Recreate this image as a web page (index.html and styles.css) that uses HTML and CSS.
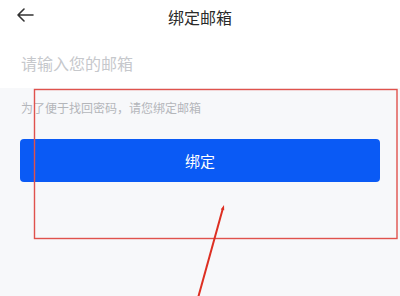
FILE: index.html
```html
<!DOCTYPE html>
<html lang="zh-CN">
<head>
    <meta charset="UTF-8">
    <meta name="viewport" content="width=device-width, initial-scale=1.0">
    <title>绑定邮箱</title>
    <link rel="stylesheet" href="styles.css">
</head>
<body>
    <header class="top-bar">
        <a class="back" href="#">
            <svg width="18" height="14" viewBox="0 0 18 14">
                <path d="M17 7H2M8 1L2 7l6 6" fill="none" stroke="#333" stroke-width="1.6" stroke-linecap="round" stroke-linejoin="round"/>
            </svg>
        </a>
        <h1>绑定邮箱</h1>
    </header>

    <section class="input-section">
        <input type="email" class="email-input" placeholder="请输入您的邮箱">
    </section>

    <section class="bind-section">
        <p class="hint">为了便于找回密码，请您绑定邮箱</p>
        <button type="button" class="bind-btn">绑定</button>
    </section>

    <!-- annotation -->
    <svg class="mark" width="400" height="296" viewBox="0 0 400 296">
        <rect x="34.5" y="89.5" width="362.5" height="149" fill="none" stroke="#e0524c" stroke-width="1.4"/>
        <path d="M198 298L223 208" stroke="#dd2f22" stroke-width="2" fill="none"/>
        <path d="M224 205l-3.2 4.4 3.4 0.9z" fill="#dd2f22"/>
    </svg>
</body>
</html>
```

FILE: styles.css
```css
body {
    margin: 0;
    width: 400px;
    height: 296px;
    overflow: hidden;
    background-color: #f7f8fa;
    font-family: "Noto Sans CJK SC", "Noto Sans", sans-serif;
    position: relative;
}

.top-bar {
    background-color: #ffffff;
    height: 33px;
    display: flex;
    align-items: center;
    justify-content: center;
    position: relative;
}

.back {
    position: absolute;
    left: 16px;
    top: 8px;
    display: flex;
}

h1 {
    margin: 0;
    font-size: 16px;
    font-weight: 400;
    color: #2a2a2a;
}

.input-section {
    background-color: #ffffff;
    height: 55px;
    display: flex;
    align-items: center;
    padding: 0 21px;
}

.email-input {
    border: none;
    outline: none;
    width: 100%;
    padding: 0;
    font-family: inherit;
    font-size: 16px;
    color: #333333;
    background: transparent;
    margin-top: 4px;
}

.email-input::placeholder {
    color: #c6c8cc;
}

.bind-section {
    padding: 10px 20px 0;
}

.hint {
    margin: 0 0 22px 1px;
    font-size: 12px;
    line-height: 19px;
    color: #b4b6ba;
}

.bind-btn {
    display: block;
    width: 100%;
    height: 43px;
    border: none;
    border-radius: 4px;
    background-color: #0a5af5;
    color: #ffffff;
    font-family: inherit;
    font-size: 15px;
    cursor: pointer;
}

.mark {
    position: absolute;
    left: 0;
    top: 0;
    pointer-events: none;
}
```
